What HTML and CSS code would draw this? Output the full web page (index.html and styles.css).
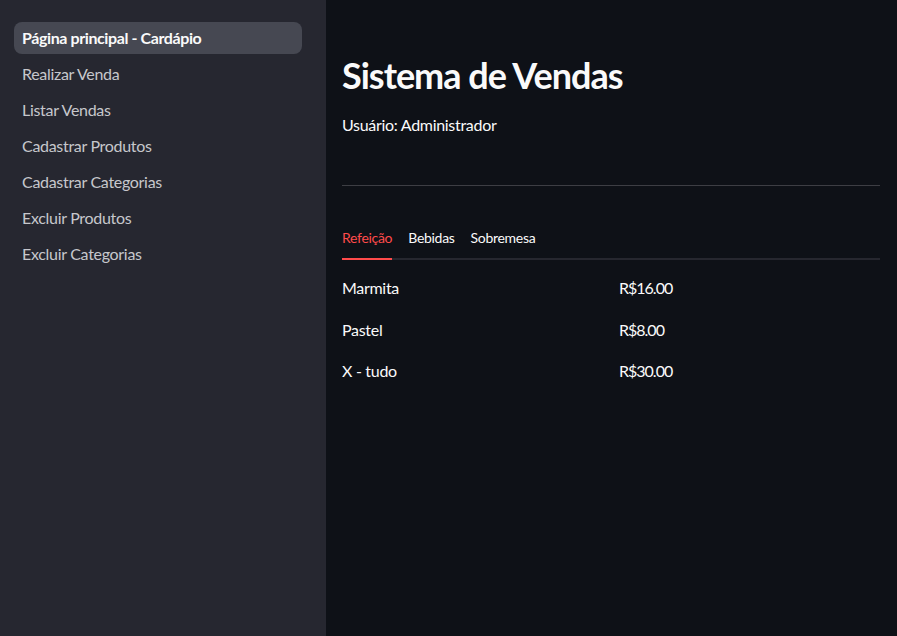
FILE: index.html
```html
<!DOCTYPE html>
<html lang="pt-BR">
<head>
<meta charset="utf-8">
<title>Sistema de Vendas</title>
<link rel="stylesheet" href="styles.css">
</head>
<body>
<div class="app">
  <aside class="sidebar">
    <nav class="nav">
      <a class="nav-item active">Página principal - Cardápio</a>
      <a class="nav-item">Realizar Venda</a>
      <a class="nav-item">Listar Vendas</a>
      <a class="nav-item">Cadastrar Produtos</a>
      <a class="nav-item">Cadastrar Categorias</a>
      <a class="nav-item">Excluir Produtos</a>
      <a class="nav-item">Excluir Categorias</a>
    </nav>
  </aside>
  <main class="main">
    <h1 class="title">Sistema de Vendas</h1>
    <p class="user">Usuário: Administrador</p>
    <hr class="divider">
    <div class="tabs">
      <div class="tab-list">
        <span class="tab active">Refeição</span>
        <span class="tab">Bebidas</span>
        <span class="tab">Sobremesa</span>
      </div>
      <div class="tab-panel">
        <div class="row"><span class="cell">Marmita</span><span class="cell price">R$16.00</span></div>
        <div class="row"><span class="cell">Pastel</span><span class="cell price">R$8.00</span></div>
        <div class="row"><span class="cell">X - tudo</span><span class="cell price">R$30.00</span></div>
      </div>
    </div>
  </main>
</div>
</body>
</html>
```
FILE: styles.css
```css
* { box-sizing: border-box; }
html, body { margin: 0; padding: 0; height: 100%; }
body {
  font-family: "Lato", "Noto Sans", sans-serif;
  background: #0e1117;
  color: #fafafa;
}
.app {
  display: flex;
  height: 100vh;
}
.sidebar {
  width: 326px;
  flex: none;
  background: #262730;
  padding: 22px 24px 0 14px;
}
.nav {
  display: flex;
  flex-direction: column;
  gap: 4px;
}
.nav-item {
  display: flex;
  align-items: center;
  height: 32px;
  padding: 0 8px 2px;
  border-radius: 8px;
  font-size: 16px;
  letter-spacing: -0.3px;
  color: #c6c7cc;
}
.nav-item.active {
  background: #464852;
  color: #fafafa;
  font-weight: 700;
  letter-spacing: -0.4px;
}
.main {
  flex: 1;
  padding: 0 17px 0 16px;
}
.title {
  margin: 52px 0 0;
  font-size: 36px;
  line-height: 46px;
  font-weight: 700;
  letter-spacing: -1px;
}
.user {
  margin: 15px 0 0;
  font-size: 16px;
  line-height: 24px;
  letter-spacing: -0.3px;
}
.divider {
  margin: 48px 0 0;
  border: 0;
  height: 1px;
  background: #3d3e44;
}
.tabs { margin-top: 32px; }
.tab-list {
  display: flex;
  gap: 16px;
  border-bottom: 2px solid #26272f;
}
.tab {
  font-size: 14px;
  line-height: 20px;
  letter-spacing: -0.3px;
  padding: 10px 0 10px;
  margin-bottom: -2px;
  border-bottom: 2px solid transparent;
}
.tab.active {
  color: #ff4b4b;
  border-bottom-color: #ff4b4b;
}
.tab-panel {
  padding-top: 16px;
  display: flex;
  flex-direction: column;
  gap: 17.5px;
}
.row {
  display: grid;
  grid-template-columns: 1fr 1fr;
  column-gap: 16px;
}
.cell {
  font-size: 16px;
  line-height: 24px;
  letter-spacing: -0.3px;
}
.price {
  letter-spacing: -1px;
}
```
